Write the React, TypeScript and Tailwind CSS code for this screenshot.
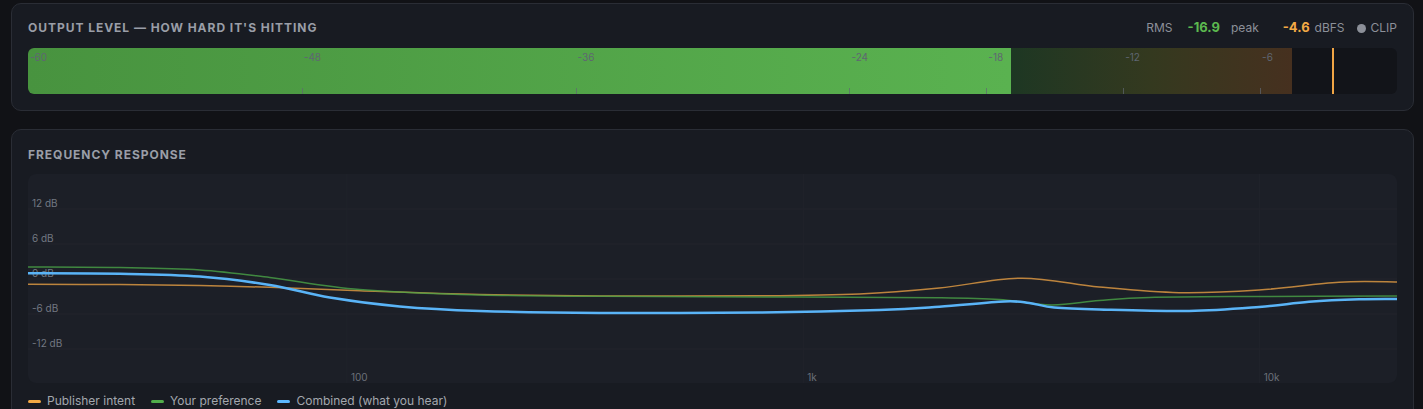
import React from "react";

type Pt = [number, number];

const CX = 28;
const CY = 174;

const orangeAbs: Pt[] = [
  [28, 284.3], [120, 284.6], [200, 285.6], [270, 287.3], [360, 290.7], [480, 294.5], [600, 296], [760, 295.8],
  [860, 294], [940, 288], [1022, 278.2], [1100, 287], [1180, 292.7], [1260, 290], [1340, 282.2], [1398, 282],
];
const greenAbs: Pt[] = [
  [28, 267], [120, 267.6], [200, 270], [270, 277.5], [360, 289.5], [480, 295], [600, 296.3], [800, 297],
  [940, 297.8], [1000, 299.5], [1052, 305], [1100, 300.5], [1150, 297.5], [1250, 296.5], [1398, 296],
];
const blueAbs: Pt[] = [
  [28, 273.3], [120, 273.8], [200, 276.5], [270, 285], [330, 297.5], [400, 306.5], [480, 311], [600, 313],
  [760, 312.6], [880, 310], [940, 306.7], [1005, 301.5], [1030, 303], [1055, 307.5], [1100, 309.5], [1190, 311],
  [1260, 307], [1310, 301.8], [1360, 299.3], [1398, 299],
];

function toPath(abs: Pt[]): string {
  const p = abs.map(([x, y]) => [x - CX, y - CY] as Pt);
  let d = `M ${p[0][0]} ${p[0][1]}`;
  for (let i = 0; i < p.length - 1; i++) {
    const p0 = p[i - 1] || p[i];
    const p1 = p[i];
    const p2 = p[i + 1];
    const p3 = p[i + 2] || p2;
    const c1x = p1[0] + (p2[0] - p0[0]) / 6;
    const c1y = p1[1] + (p2[1] - p0[1]) / 6;
    const c2x = p2[0] - (p3[0] - p1[0]) / 6;
    const c2y = p2[1] - (p3[1] - p1[1]) / 6;
    d += ` C ${c1x.toFixed(2)} ${c1y.toFixed(2)}, ${c2x.toFixed(2)} ${c2y.toFixed(2)}, ${p2[0].toFixed(2)} ${p2[1].toFixed(2)}`;
  }
  return d;
}

const W = 1370;
const H = 209;
const fx = (f: number) => ((Math.log10(f) - Math.log10(20)) / 3) * W;
const dy = (db: number) => 105 - (db * 35) / 6;

const meterMarks = [-60, -48, -36, -24, -18, -12, -6];
const pct = (db: number) => ((db + 60) / 60) * 100;

function Meter() {
  return (
    <div className="relative h-[46px] w-full overflow-hidden rounded-md bg-[#121419]">
      <div
        className="absolute left-0 top-0 h-full bg-gradient-to-r from-[#48933f] to-[#5ab250]"
        style={{ width: `${pct(-16.9)}%` }}
      />
      <div
        className="absolute top-0 h-full bg-gradient-to-r from-[#1d3723] via-[#34391f] to-[#46301f]"
        style={{ left: `${pct(-16.9)}%`, width: `${pct(-4.6) - pct(-16.9)}%` }}
      />
      <div className="absolute top-0 h-full w-[2px] bg-[#f0a545]" style={{ left: `${pct(-2.85)}%` }} />
      {meterMarks.map((m) => (
        <React.Fragment key={m}>
          <span
            className="absolute top-[3px] ml-[2px] text-[10px] leading-[12px] text-[#5f6672]"
            style={{ left: `${pct(m)}%` }}
          >
            {m}
          </span>
          {m !== -60 && (
            <span className="absolute bottom-0 h-[6px] w-px bg-[#5f6672]/70" style={{ left: `${pct(m)}%` }} />
          )}
        </React.Fragment>
      ))}
    </div>
  );
}

function Chart() {
  const dbs = [12, 6, 0, -6, -12];
  const freqs: [number, string][] = [
    [100, "100"],
    [1000, "1k"],
    [10000, "10k"],
  ];
  return (
    <div className="h-[209px] w-full overflow-hidden rounded-lg bg-[#1c1f27]">
      <svg width="100%" height="209" viewBox={`0 0 ${W} ${H}`} preserveAspectRatio="none" className="block">
        {dbs.map((db) => (
          <line key={db} x1={0} x2={W} y1={dy(db)} y2={dy(db)} stroke="#22252d" strokeWidth={1} />
        ))}
        {freqs.map(([f]) => (
          <line key={f} x1={fx(f)} x2={fx(f)} y1={0} y2={H} stroke="#20232b" strokeWidth={1} />
        ))}
        {dbs.map((db) => (
          <text
            key={"t" + db}
            x={4}
            y={dy(db) - 1.5}
            fontSize={10}
            fill="#737882"
            fontFamily="Inter, 'Noto Sans', sans-serif"
          >
            {db} dB
          </text>
        ))}
        {freqs.map(([f, l]) => (
          <text
            key={"f" + f}
            x={fx(f) + 4}
            y={207}
            fontSize={10}
            fill="#6b7079"
            fontFamily="Inter, 'Noto Sans', sans-serif"
          >
            {l}
          </text>
        ))}
        <path d={toPath(orangeAbs)} fill="none" stroke="#e59d44" strokeOpacity={0.8} strokeWidth={1.5} />
        <path d={toPath(greenAbs)} fill="none" stroke="#4aa347" strokeOpacity={0.8} strokeWidth={1.5} />
        <path d={toPath(blueAbs)} fill="none" stroke="#5ab4f7" strokeWidth={2.5} strokeLinecap="round" />
      </svg>
    </div>
  );
}

function LegendItem({ color, label }: { color: string; label: string }) {
  return (
    <div className="flex items-center gap-[6px]">
      <span className={`h-[3px] w-[13px] rounded-full ${color}`} />
      <span>{label}</span>
    </div>
  );
}

export default function App() {
  return (
    <div
      className="min-h-[409px] w-full bg-[#111216] pl-[11px] pr-[9px] pt-[3px]"
      style={{ fontFamily: "Inter, 'Noto Sans', sans-serif" }}
    >
      <div className="flex flex-col gap-[18px]">
        <section className="rounded-[10px] border border-[#2a2d35] bg-[#181b22] px-4 pb-4 pt-4">
          <div className="flex h-4 items-center justify-between">
            <h2 className="text-[12px] font-bold uppercase leading-4 tracking-[0.08em] text-[#9a9ea7]">
              Output level — how hard it's hitting
            </h2>
            <div className="flex items-center text-[12px] text-[#8c9099]">
              <span>RMS</span>
              <span className="ml-[15px] text-[13px] font-bold text-[#5cb84f]">-16.9</span>
              <span className="ml-[11px]">peak</span>
              <span className="ml-[24px] text-[13px] font-bold text-[#f2a945]">-4.6</span>
              <span className="ml-[5px]">dBFS</span>
              <span className="ml-[12px] h-[9px] w-[9px] rounded-full bg-[#8c9099]" />
              <span className="ml-[5px]">CLIP</span>
            </div>
          </div>
          <div className="mt-[12px]">
            <Meter />
          </div>
        </section>

        <section className="rounded-[10px] border border-[#2a2d35] bg-[#181b22] px-4 pb-4 pt-4">
          <h2 className="mt-[1px] h-4 text-[12px] font-bold uppercase leading-4 tracking-[0.08em] text-[#9a9ea7]">
            Frequency response
          </h2>
          <div className="mt-[11px]">
            <Chart />
          </div>
          <div className="mt-[10px] flex items-center gap-4 text-[12px] leading-4 text-[#a3a7ae]">
            <LegendItem color="bg-[#f2a945]" label="Publisher intent" />
            <LegendItem color="bg-[#52ad4b]" label="Your preference" />
            <LegendItem color="bg-[#5cb8ff]" label="Combined (what you hear)" />
          </div>
        </section>
      </div>
    </div>
  );
}
